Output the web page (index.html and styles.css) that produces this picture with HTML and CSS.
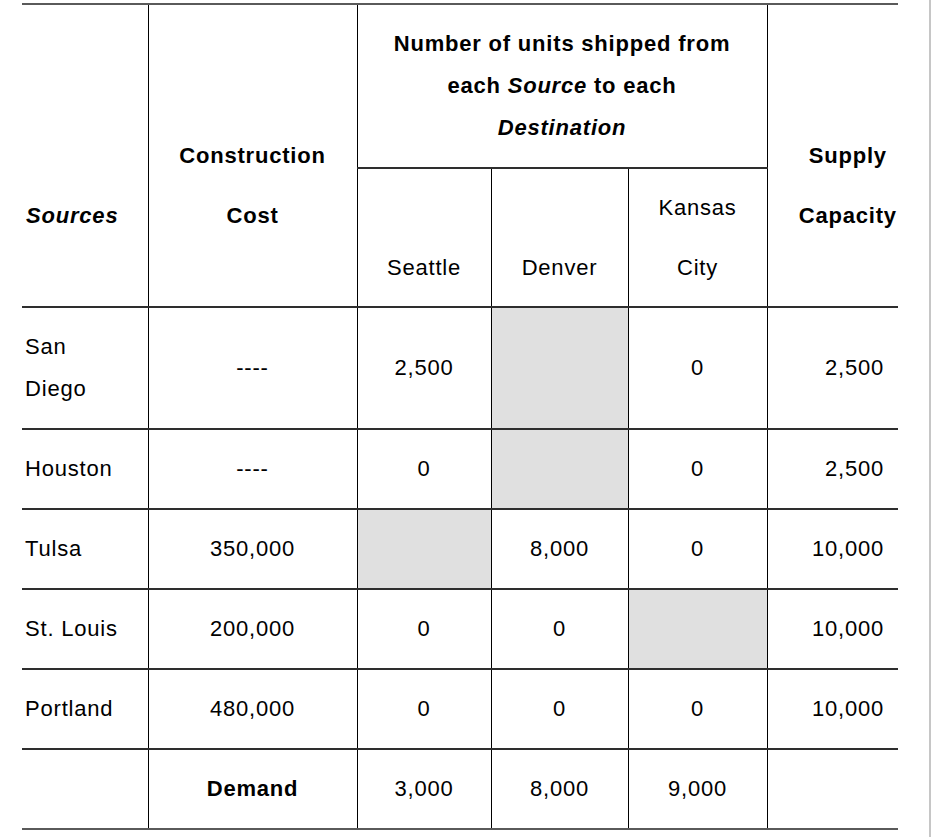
FILE: index.html
```html
<!DOCTYPE html>
<html lang="en">
<head>
<meta charset="utf-8">
<title>Transportation table</title>
<link rel="stylesheet" href="styles.css">
</head>
<body>
<div class="page">
  <table class="grid">
    <colgroup>
      <col class="c-src">
      <col class="c-cost">
      <col class="c-sea">
      <col class="c-den">
      <col class="c-kc">
      <col class="c-sup">
    </colgroup>
    <thead>
      <tr class="head-top">
        <th rowspan="2" class="h-src"><em>Sources</em></th>
        <th rowspan="2" class="h-tall">Construction<br>Cost</th>
        <th colspan="3" class="h-title">Number of units shipped from<br>each <em>Source</em> to each<br><em>Destination</em></th>
        <th rowspan="2" class="h-tall h-sup">Supply<br>Capacity</th>
      </tr>
      <tr class="head-sub">
        <td class="h-dest">Seattle</td>
        <td class="h-dest">Denver</td>
        <td class="h-dest">Kansas<br>City</td>
      </tr>
    </thead>
    <tbody>
      <tr>
        <td class="src">San<br>Diego</td>
        <td class="mid">----</td>
        <td class="mid">2,500</td>
        <td class="mid off"></td>
        <td class="mid">0</td>
        <td class="num">2,500</td>
      </tr>
      <tr>
        <td class="src">Houston</td>
        <td class="mid">----</td>
        <td class="mid">0</td>
        <td class="mid off"></td>
        <td class="mid">0</td>
        <td class="num">2,500</td>
      </tr>
      <tr>
        <td class="src">Tulsa</td>
        <td class="mid">350,000</td>
        <td class="mid off"></td>
        <td class="mid">8,000</td>
        <td class="mid">0</td>
        <td class="num">10,000</td>
      </tr>
      <tr>
        <td class="src">St. Louis</td>
        <td class="mid">200,000</td>
        <td class="mid">0</td>
        <td class="mid">0</td>
        <td class="mid off"></td>
        <td class="num">10,000</td>
      </tr>
      <tr>
        <td class="src">Portland</td>
        <td class="mid">480,000</td>
        <td class="mid">0</td>
        <td class="mid">0</td>
        <td class="mid">0</td>
        <td class="num">10,000</td>
      </tr>
      <tr class="demand">
        <td class="src"></td>
        <td class="mid"><strong>Demand</strong></td>
        <td class="mid">3,000</td>
        <td class="mid">8,000</td>
        <td class="mid">9,000</td>
        <td class="num"></td>
      </tr>
    </tbody>
  </table>
</div>
</body>
</html>
```

FILE: styles.css
```css
html, body {
  margin: 0;
  padding: 0;
  background: #ffffff;
}

.page {
  width: 931px;
  min-height: 837px;
  box-sizing: border-box;
  padding: 3px 0 0 22px;
  border-right: 2px solid #c6c6c6;
}

.grid {
  width: 876px;
  table-layout: fixed;
  border-collapse: collapse;
  font-family: "Liberation Sans", Arial, Helvetica, sans-serif;
  font-size: 22px;
  letter-spacing: 0.8px;
  color: #000;
}

.c-src { width: 126px; }
.c-cost { width: 209px; }
.c-sea { width: 134px; }
.c-den { width: 137px; }
.c-kc { width: 139px; }
.c-sup { width: 131px; }

.grid th,
.grid td {
  padding: 0;
  border-top: 2px solid #2e2e2e;
  border-bottom: 2px solid #2e2e2e;
  border-left: 1.5px solid #000;
  border-right: 1.5px solid #000;
}

.grid tr > :first-child { border-left: none; }
.grid tr > :last-child { border-right: none; }
.grid .head-sub > :first-child { border-left: 1.5px solid #000; }
.grid .head-sub > :last-child { border-right: 1.5px solid #000; }

.grid thead tr:first-child > * { border-top: 2px solid #5a5a5a; }
.grid tbody tr:last-child > * { border-bottom: 2px solid #5a5a5a; }

.grid th { font-weight: bold; }
.grid em { font-style: italic; }

.grid .h-src {
  text-align: left;
  vertical-align: bottom;
  line-height: 60px;
  padding: 0 0 60px 4px;
}

.grid .h-tall {
  text-align: center;
  vertical-align: bottom;
  line-height: 60px;
  padding: 0 0 60px 0;
}

.grid .h-sup {
  padding-left: 30px;
}

.grid .h-title {
  text-align: center;
  vertical-align: top;
  line-height: 42px;
  padding: 18px 0 18px;
}

.grid .h-dest {
  text-align: center;
  vertical-align: bottom;
  line-height: 60px;
  padding: 9px 0 8px;
}

.grid tbody td {
  line-height: 42px;
  padding-top: 18px;
  padding-bottom: 18px;
  vertical-align: middle;
}

.grid tbody .src { text-align: left; padding-left: 3px; }
.grid tbody .mid { text-align: center; }
.grid tbody .num { text-align: right; padding-right: 14px; }

.grid .off { background: #e0e0e0; }

.demand strong { font-weight: bold; }
```
